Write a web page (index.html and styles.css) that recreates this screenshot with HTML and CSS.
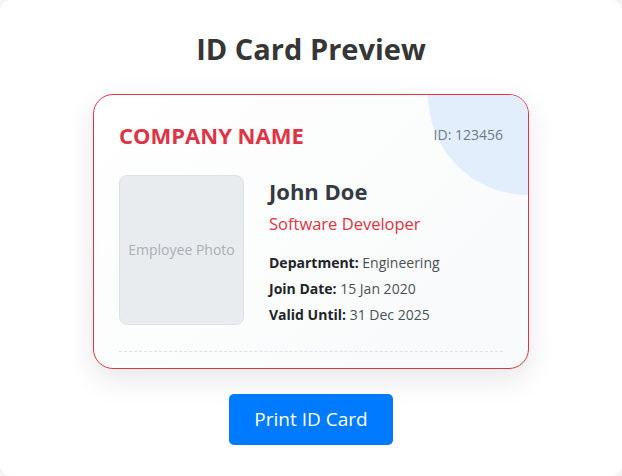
FILE: index.html
```html
<!DOCTYPE html>
<html lang="en">
<head>
<meta charset="UTF-8">
<title>ID Card Preview</title>
<link rel="stylesheet" href="styles.css">
</head>
<body>
<div class="page">
  <h1 class="title">ID Card Preview</h1>
  <div class="card">
    <div class="card-circle"></div>
    <div class="card-header">
      <div class="company">COMPANY NAME</div>
      <div class="emp-id">ID: 123456</div>
    </div>
    <div class="card-body">
      <div class="photo">Employee Photo</div>
      <div class="info">
        <div class="name">John Doe</div>
        <div class="role">Software Developer</div>
        <div class="details">
          <div class="row"><b>Department:</b> Engineering</div>
          <div class="row"><b>Join Date:</b> 15 Jan 2020</div>
          <div class="row"><b>Valid Until:</b> 31 Dec 2025</div>
        </div>
      </div>
    </div>
    <div class="card-footer">
      <div class="footer-item">Authorized Signature</div>
    </div>
  </div>
  <button class="print-btn" type="button">Print ID Card</button>
</div>
</body>
</html>
```
FILE: styles.css
```css
* { box-sizing: border-box; }
html, body { margin: 0; padding: 0; background: #f7f7f7; }
body {
  font-family: "Open Sans", "Noto Sans", sans-serif;
  color: #333;
}
.page {
  min-height: 100vh;
  background: #fff;
  border-radius: 10px;
  box-shadow: 0 0 6px rgba(0, 0, 0, 0.06);
  padding-top: 32px;
  display: flex;
  flex-direction: column;
  align-items: center;
}
.title {
  margin: 0 0 27px;
  font-size: 29px;
  line-height: 1.2;
  font-weight: 700;
  color: #363636;
}
.card {
  position: relative;
  width: 436px;
  height: 275px;
  overflow: hidden;
  border: 1px solid #dc3545;
  border-radius: 20px;
  padding: 25px;
  background: linear-gradient(135deg, #ffffff, #f8f9fa);
  box-shadow: 0 10px 30px rgba(0, 0, 0, 0.1);
}
.card-circle {
  position: absolute;
  top: -100px;
  right: -100px;
  width: 200px;
  height: 200px;
  border-radius: 50%;
  background: #e2eefc;
}
.card-header, .card-body, .card-footer { position: relative; }
.card-header {
  display: flex;
  justify-content: space-between;
  align-items: center;
  margin-bottom: 25px;
}
.company {
  font-size: 22px;
  line-height: 30px;
  font-weight: 700;
  color: #dc3545;
}
.emp-id {
  font-size: 14px;
  color: #6c7a89;
}
.card-body {
  display: flex;
  gap: 25px;
}
.photo {
  width: 125px;
  height: 150px;
  flex: none;
  display: flex;
  align-items: center;
  justify-content: center;
  background: #e9ecef;
  border: 1px solid #dee2e6;
  border-radius: 8px;
  font-size: 14px;
  color: #a9afb5;
}
.name {
  font-size: 22px;
  line-height: 32px;
  font-weight: 700;
  color: #343a40;
  margin-bottom: 6px;
}
.role {
  font-size: 16.5px;
  line-height: 22px;
  color: #dc3545;
  margin-bottom: 15px;
}
.row {
  font-size: 14px;
  line-height: 26px;
  color: #495057;
}
.row b { color: #212529; font-weight: 700; }
.card-footer {
  margin-top: 23px;
  border-top: 1px dashed #dee2e6;
  padding-top: 14px;
  display: flex;
  justify-content: center;
  font-size: 12px;
  color: #6c757d;
}
.print-btn {
  margin-top: 25px;
  font-family: inherit;
  font-size: 19px;
  line-height: 27px;
  padding: 12px 25px;
  color: #fff;
  background: #007bff;
  border: none;
  border-radius: 5px;
  cursor: pointer;
}
```
